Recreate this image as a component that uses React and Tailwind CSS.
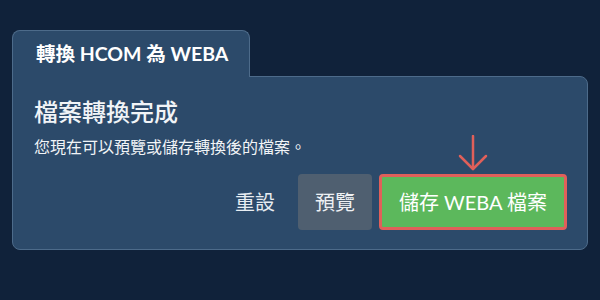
import React from "react";

function SaveArrow() {
    return (
        <svg
            className="absolute left-1/2 -translate-x-1/2 bottom-[calc(100%+3px)]"
            width="30"
            height="36"
            viewBox="0 0 30 36"
            fill="none"
            stroke="#e0605a"
            strokeWidth="2.5"
            strokeLinecap="round"
            strokeLinejoin="round"
        >
            <line x1="15" y1="1" x2="15" y2="34" />
            <polyline points="2,21 15,34 28,21" />
        </svg>
    );
}

export default function App() {
    return (
        <div
            className="w-[600px] h-[300px] bg-[#10223a] pt-[30px] px-[12px] text-white"
            style={{ fontFamily: 'Lato, "Noto Sans CJK TC", sans-serif' }}
        >
            {/* tab */}
            <div className="relative z-10 -mb-px w-[238px] h-[47px] bg-[#2c4a6a] border border-b-0 border-[#4d6b8a] rounded-t-lg pl-[23px] flex items-center">
                <span className="text-[19.5px] font-bold leading-none">轉換 HCOM 為 WEBA</span>
            </div>

            {/* card */}
            <div className="bg-[#2c4a6a] border border-[#4d6b8a] rounded-lg rounded-tl-none pt-[20px] pb-[19px] pl-[21px] pr-[20px]">
                <h2 className="text-[24px] font-medium leading-[30px] text-[#f1f4f7]">檔案轉換完成</h2>
                <p className="mt-[8px] text-[16px] leading-[24px] text-[#f1f4f7]">您現在可以預覽或儲存轉換後的檔案。</p>

                <div className="mt-[15px] flex items-center justify-end">
                    <button className="px-[12px] h-[56px] text-[20px] text-[#e8edf2] mr-[11px]">重設</button>
                    <button className="h-[56px] px-[17px] rounded bg-[#4f5f70] text-[20px] text-[#eef1f4]">預覽</button>
                    <div className="relative ml-[7px]">
                        <SaveArrow />
                        <button className="h-[56px] px-[17px] rounded border-[3px] border-[#e0605a] bg-[#5cb85c] text-[20px] text-white">
                            儲存 WEBA 檔案
                        </button>
                    </div>
                </div>
            </div>
        </div>
    );
}
